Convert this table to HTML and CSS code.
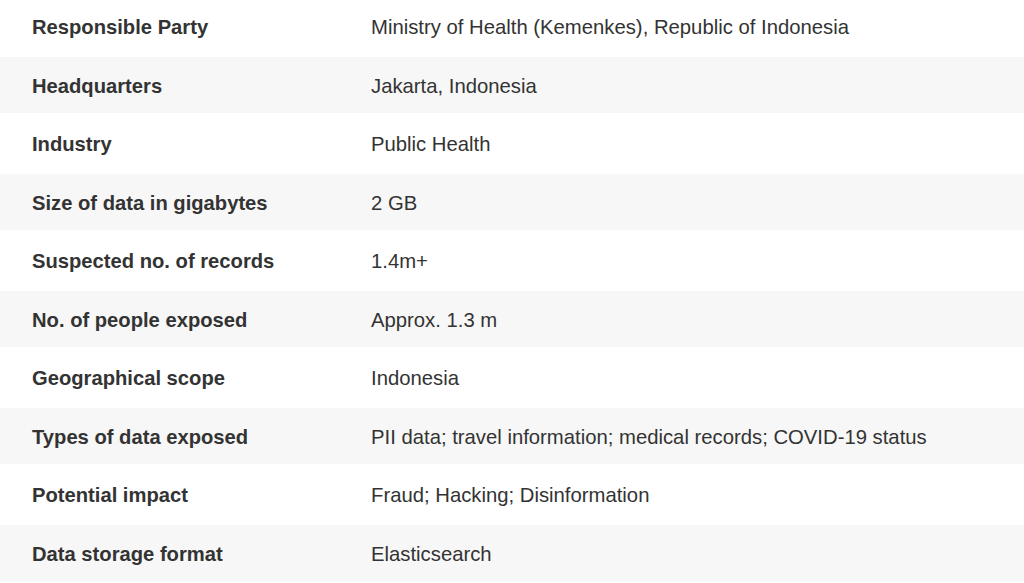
FILE: index.html
```html
<!DOCTYPE html>
<html lang="en">
<head>
<meta charset="utf-8">
<title>Data breach details</title>
<link rel="stylesheet" href="styles.css">
</head>
<body>
<div class="table">
  <div class="row"><div class="label">Responsible Party</div><div class="value">Ministry of Health (Kemenkes), Republic of Indonesia</div></div>
  <div class="row alt"><div class="label">Headquarters</div><div class="value">Jakarta, Indonesia</div></div>
  <div class="row"><div class="label">Industry</div><div class="value">Public Health</div></div>
  <div class="row alt"><div class="label">Size of data in gigabytes</div><div class="value">2 GB</div></div>
  <div class="row"><div class="label">Suspected no. of records</div><div class="value">1.4m+</div></div>
  <div class="row alt"><div class="label">No. of people exposed</div><div class="value">Approx. 1.3 m</div></div>
  <div class="row"><div class="label">Geographical scope</div><div class="value">Indonesia</div></div>
  <div class="row alt"><div class="label">Types of data exposed</div><div class="value">PII data; travel information; medical records; COVID-19 status</div></div>
  <div class="row"><div class="label">Potential impact</div><div class="value">Fraud; Hacking; Disinformation</div></div>
  <div class="row alt"><div class="label">Data storage format</div><div class="value">Elasticsearch</div></div>
</div>
</body>
</html>
```

FILE: styles.css
```css
html, body {
  margin: 0;
  padding: 0;
  background: #ffffff;
  overflow: hidden;
}

body {
  font-family: "Liberation Sans", Arial, sans-serif;
  font-size: 20px;
  color: #333333;
}

.table {
  display: flex;
  flex-direction: column;
  gap: 3px;
  margin-top: -1.5px;
}

.row {
  display: grid;
  grid-template-columns: 339px 1fr;
  align-items: center;
  height: 55.5px;
  padding-left: 32px;
  padding-top: 3px;
  box-sizing: border-box;
  background: #ffffff;
}

.row.alt {
  background: #f7f7f7;
}

.label {
  font-weight: bold;
  font-size: 20.2px;
}

.value {
  font-weight: normal;
  font-size: 20.3px;
}
```
